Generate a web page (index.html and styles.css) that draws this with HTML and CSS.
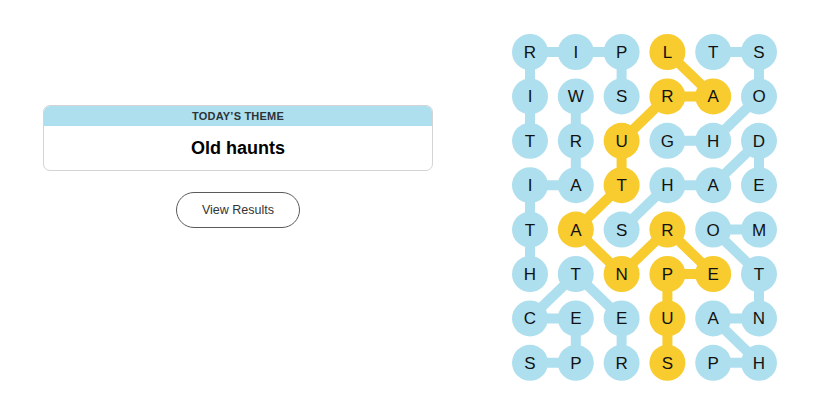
FILE: index.html
```html
<!DOCTYPE html>
<html lang="en">
<head>
<meta charset="utf-8">
<title>Strands</title>
<link rel="stylesheet" href="styles.css">
</head>
<body>
<main class="page">
  <section class="side">
    <div class="theme-card">
      <div class="theme-head">TODAY’S THEME</div>
      <div class="theme-body"><h1 class="theme-title">Old haunts</h1></div>
    </div>
    <button class="results" type="button">View Results</button>
  </section>
  <div class="board">
    <svg class="board-svg" width="265" height="347" viewBox="0 0 265 347" xmlns="http://www.w3.org/2000/svg">
      <g class="links-blue">
        <!-- SPIRIT -->
        <line x1="109.6" y1="62.4" x2="109.6" y2="18"/>
        <line x1="109.6" y1="18" x2="63.8" y2="18"/>
        <line x1="63.8" y1="18" x2="18" y2="18"/>
        <line x1="18" y1="18" x2="18" y2="62.4"/>
        <line x1="18" y1="62.4" x2="18" y2="106.8"/>
        <!-- WRAITH -->
        <line x1="63.8" y1="62.4" x2="63.8" y2="106.8"/>
        <line x1="63.8" y1="106.8" x2="63.8" y2="151.2"/>
        <line x1="63.8" y1="151.2" x2="18" y2="151.2"/>
        <line x1="18" y1="151.2" x2="18" y2="195.6"/>
        <line x1="18" y1="195.6" x2="18" y2="240"/>
        <!-- GHOST -->
        <line x1="155.4" y1="106.8" x2="201.2" y2="106.8"/>
        <line x1="201.2" y1="106.8" x2="247" y2="62.4"/>
        <line x1="247" y1="62.4" x2="247" y2="18"/>
        <line x1="247" y1="18" x2="201.2" y2="18"/>
        <!-- SHADE -->
        <line x1="109.6" y1="195.6" x2="155.4" y2="151.2"/>
        <line x1="155.4" y1="151.2" x2="201.2" y2="151.2"/>
        <line x1="201.2" y1="151.2" x2="247" y2="106.8"/>
        <line x1="247" y1="106.8" x2="247" y2="151.2"/>
        <!-- PHANTOM -->
        <line x1="201.2" y1="328.8" x2="247" y2="328.8"/>
        <line x1="247" y1="328.8" x2="201.2" y2="284.4"/>
        <line x1="201.2" y1="284.4" x2="247" y2="284.4"/>
        <line x1="247" y1="284.4" x2="247" y2="240"/>
        <line x1="247" y1="240" x2="201.2" y2="195.6"/>
        <line x1="201.2" y1="195.6" x2="247" y2="195.6"/>
        <!-- SPECTER -->
        <line x1="18" y1="328.8" x2="63.8" y2="328.8"/>
        <line x1="63.8" y1="328.8" x2="63.8" y2="284.4"/>
        <line x1="63.8" y1="284.4" x2="18" y2="284.4"/>
        <line x1="18" y1="284.4" x2="63.8" y2="240"/>
        <line x1="63.8" y1="240" x2="109.6" y2="284.4"/>
        <line x1="109.6" y1="284.4" x2="109.6" y2="328.8"/>
      </g>
      <g class="links-gold">
        <!-- SUPERNATURAL -->
        <line x1="155.4" y1="328.8" x2="155.4" y2="284.4"/>
        <line x1="155.4" y1="284.4" x2="155.4" y2="240"/>
        <line x1="155.4" y1="240" x2="201.2" y2="240"/>
        <line x1="201.2" y1="240" x2="155.4" y2="195.6"/>
        <line x1="155.4" y1="195.6" x2="109.6" y2="240"/>
        <line x1="109.6" y1="240" x2="63.8" y2="195.6"/>
        <line x1="63.8" y1="195.6" x2="109.6" y2="151.2"/>
        <line x1="109.6" y1="151.2" x2="109.6" y2="106.8"/>
        <line x1="109.6" y1="106.8" x2="155.4" y2="62.4"/>
        <line x1="155.4" y1="62.4" x2="201.2" y2="62.4"/>
        <line x1="201.2" y1="62.4" x2="155.4" y2="18"/>
      </g>

      <!-- row 0 -->
      <g class="cell"><circle class="dot-blue" cx="18" cy="18" r="18"/><text x="18" y="24">R</text></g>
      <g class="cell"><circle class="dot-blue" cx="63.8" cy="18" r="18"/><text x="63.8" y="24">I</text></g>
      <g class="cell"><circle class="dot-blue" cx="109.6" cy="18" r="18"/><text x="109.6" y="24">P</text></g>
      <g class="cell"><circle class="dot-gold" cx="155.4" cy="18" r="18"/><text x="155.4" y="24">L</text></g>
      <g class="cell"><circle class="dot-blue" cx="201.2" cy="18" r="18"/><text x="201.2" y="24">T</text></g>
      <g class="cell"><circle class="dot-blue" cx="247" cy="18" r="18"/><text x="247" y="24">S</text></g>
      <!-- row 1 -->
      <g class="cell"><circle class="dot-blue" cx="18" cy="62.4" r="18"/><text x="18" y="68.4">I</text></g>
      <g class="cell"><circle class="dot-blue" cx="63.8" cy="62.4" r="18"/><text x="63.8" y="68.4">W</text></g>
      <g class="cell"><circle class="dot-blue" cx="109.6" cy="62.4" r="18"/><text x="109.6" y="68.4">S</text></g>
      <g class="cell"><circle class="dot-gold" cx="155.4" cy="62.4" r="18"/><text x="155.4" y="68.4">R</text></g>
      <g class="cell"><circle class="dot-gold" cx="201.2" cy="62.4" r="18"/><text x="201.2" y="68.4">A</text></g>
      <g class="cell"><circle class="dot-blue" cx="247" cy="62.4" r="18"/><text x="247" y="68.4">O</text></g>
      <!-- row 2 -->
      <g class="cell"><circle class="dot-blue" cx="18" cy="106.8" r="18"/><text x="18" y="112.8">T</text></g>
      <g class="cell"><circle class="dot-blue" cx="63.8" cy="106.8" r="18"/><text x="63.8" y="112.8">R</text></g>
      <g class="cell"><circle class="dot-gold" cx="109.6" cy="106.8" r="18"/><text x="109.6" y="112.8">U</text></g>
      <g class="cell"><circle class="dot-blue" cx="155.4" cy="106.8" r="18"/><text x="155.4" y="112.8">G</text></g>
      <g class="cell"><circle class="dot-blue" cx="201.2" cy="106.8" r="18"/><text x="201.2" y="112.8">H</text></g>
      <g class="cell"><circle class="dot-blue" cx="247" cy="106.8" r="18"/><text x="247" y="112.8">D</text></g>
      <!-- row 3 -->
      <g class="cell"><circle class="dot-blue" cx="18" cy="151.2" r="18"/><text x="18" y="157.2">I</text></g>
      <g class="cell"><circle class="dot-blue" cx="63.8" cy="151.2" r="18"/><text x="63.8" y="157.2">A</text></g>
      <g class="cell"><circle class="dot-gold" cx="109.6" cy="151.2" r="18"/><text x="109.6" y="157.2">T</text></g>
      <g class="cell"><circle class="dot-blue" cx="155.4" cy="151.2" r="18"/><text x="155.4" y="157.2">H</text></g>
      <g class="cell"><circle class="dot-blue" cx="201.2" cy="151.2" r="18"/><text x="201.2" y="157.2">A</text></g>
      <g class="cell"><circle class="dot-blue" cx="247" cy="151.2" r="18"/><text x="247" y="157.2">E</text></g>
      <!-- row 4 -->
      <g class="cell"><circle class="dot-blue" cx="18" cy="195.6" r="18"/><text x="18" y="201.6">T</text></g>
      <g class="cell"><circle class="dot-gold" cx="63.8" cy="195.6" r="18"/><text x="63.8" y="201.6">A</text></g>
      <g class="cell"><circle class="dot-blue" cx="109.6" cy="195.6" r="18"/><text x="109.6" y="201.6">S</text></g>
      <g class="cell"><circle class="dot-gold" cx="155.4" cy="195.6" r="18"/><text x="155.4" y="201.6">R</text></g>
      <g class="cell"><circle class="dot-blue" cx="201.2" cy="195.6" r="18"/><text x="201.2" y="201.6">O</text></g>
      <g class="cell"><circle class="dot-blue" cx="247" cy="195.6" r="18"/><text x="247" y="201.6">M</text></g>
      <!-- row 5 -->
      <g class="cell"><circle class="dot-blue" cx="18" cy="240" r="18"/><text x="18" y="246">H</text></g>
      <g class="cell"><circle class="dot-blue" cx="63.8" cy="240" r="18"/><text x="63.8" y="246">T</text></g>
      <g class="cell"><circle class="dot-gold" cx="109.6" cy="240" r="18"/><text x="109.6" y="246">N</text></g>
      <g class="cell"><circle class="dot-gold" cx="155.4" cy="240" r="18"/><text x="155.4" y="246">P</text></g>
      <g class="cell"><circle class="dot-gold" cx="201.2" cy="240" r="18"/><text x="201.2" y="246">E</text></g>
      <g class="cell"><circle class="dot-blue" cx="247" cy="240" r="18"/><text x="247" y="246">T</text></g>
      <!-- row 6 -->
      <g class="cell"><circle class="dot-blue" cx="18" cy="284.4" r="18"/><text x="18" y="290.4">C</text></g>
      <g class="cell"><circle class="dot-blue" cx="63.8" cy="284.4" r="18"/><text x="63.8" y="290.4">E</text></g>
      <g class="cell"><circle class="dot-blue" cx="109.6" cy="284.4" r="18"/><text x="109.6" y="290.4">E</text></g>
      <g class="cell"><circle class="dot-gold" cx="155.4" cy="284.4" r="18"/><text x="155.4" y="290.4">U</text></g>
      <g class="cell"><circle class="dot-blue" cx="201.2" cy="284.4" r="18"/><text x="201.2" y="290.4">A</text></g>
      <g class="cell"><circle class="dot-blue" cx="247" cy="284.4" r="18"/><text x="247" y="290.4">N</text></g>
      <!-- row 7 -->
      <g class="cell"><circle class="dot-blue" cx="18" cy="328.8" r="18"/><text x="18" y="334.8">S</text></g>
      <g class="cell"><circle class="dot-blue" cx="63.8" cy="328.8" r="18"/><text x="63.8" y="334.8">P</text></g>
      <g class="cell"><circle class="dot-blue" cx="109.6" cy="328.8" r="18"/><text x="109.6" y="334.8">R</text></g>
      <g class="cell"><circle class="dot-gold" cx="155.4" cy="328.8" r="18"/><text x="155.4" y="334.8">S</text></g>
      <g class="cell"><circle class="dot-blue" cx="201.2" cy="328.8" r="18"/><text x="201.2" y="334.8">P</text></g>
      <g class="cell"><circle class="dot-blue" cx="247" cy="328.8" r="18"/><text x="247" y="334.8">H</text></g>
    </svg>
  </div>
</main>
</body>
</html>
```

FILE: styles.css
```css
html, body {
  margin: 0;
  padding: 0;
  background: #ffffff;
  font-family: "Liberation Sans", Arial, sans-serif;
  color: #121212;
}

.page {
  display: flex;
  align-items: flex-start;
  padding: 34px 0 0 43px;
  gap: 79px;
}

.side {
  width: 390px;
  margin-top: 71px;
  display: flex;
  flex-direction: column;
  align-items: center;
}

.theme-card {
  width: 100%;
  box-sizing: border-box;
  border: 1px solid #d4d4d4;
  border-radius: 7px;
  overflow: hidden;
  background: #ffffff;
}

.theme-head {
  height: 20px;
  line-height: 21px;
  background: #aedfee;
  text-align: center;
  font-size: 11px;
  font-weight: 700;
  letter-spacing: 0.2px;
  color: #2b3438;
}

.theme-body {
  height: 44px;
  display: flex;
  align-items: center;
  justify-content: center;
}

.theme-title {
  margin: 0;
  font-size: 18px;
  font-weight: 700;
  color: #000000;
}

.results {
  margin-top: 21px;
  width: 124px;
  height: 36px;
  box-sizing: border-box;
  border: 1px solid #5a5a5a;
  border-radius: 18px;
  background: #ffffff;
  font-family: "Liberation Sans", Arial, sans-serif;
  font-size: 12.5px;
  color: #333333;
  padding: 0;
}

.board {
  display: block;
}

.board-svg {
  display: block;
}

.links-blue line {
  stroke: #aedfee;
  stroke-width: 10;
  stroke-linecap: round;
}

.links-gold line {
  stroke: #f8cb2e;
  stroke-width: 10;
  stroke-linecap: round;
}

.dot-blue {
  fill: #aedfee;
}

.dot-gold {
  fill: #f8cb2e;
}

.cell text {
  font-family: "Liberation Sans", Arial, sans-serif;
  font-size: 17px;
  fill: #121212;
  text-anchor: middle;
}
```
